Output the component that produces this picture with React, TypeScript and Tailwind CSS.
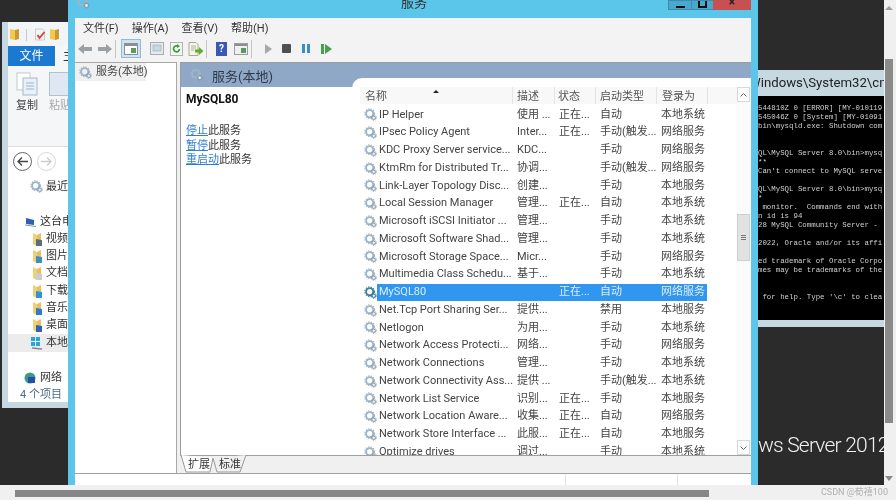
import React from 'react'

const uiFont = { fontFamily: 'Roboto, "Noto Sans CJK SC", sans-serif' }

const services: [string, string, string, string, string][] = [
  ['IP Helper', '使用 ...', '正在...', '自动', '本地系统'],
  ['IPsec Policy Agent', 'Inter...', '正在...', '手动(触发...', '网络服务'],
  ['KDC Proxy Server service...', 'KDC...', '', '手动', '网络服务'],
  ['KtmRm for Distributed Tr...', '协调...', '', '手动(触发...', '网络服务'],
  ['Link-Layer Topology Disc...', '创建...', '', '手动', '本地服务'],
  ['Local Session Manager', '管理...', '正在...', '自动', '本地系统'],
  ['Microsoft iSCSI Initiator ...', '管理...', '', '手动', '本地系统'],
  ['Microsoft Software Shad...', '管理...', '', '手动', '本地系统'],
  ['Microsoft Storage Space...', 'Micr...', '', '手动', '网络服务'],
  ['Multimedia Class Schedu...', '基于...', '', '手动', '本地系统'],
  ['MySQL80', '', '正在...', '自动', '网络服务'],
  ['Net.Tcp Port Sharing Ser...', '提供...', '', '禁用', '本地服务'],
  ['Netlogon', '为用...', '', '手动', '本地系统'],
  ['Network Access Protecti...', '网络...', '', '手动', '网络服务'],
  ['Network Connections', '管理...', '', '手动', '本地系统'],
  ['Network Connectivity Ass...', '提供 ...', '', '手动(触发...', '本地系统'],
  ['Network List Service', '识别...', '正在...', '手动', '本地服务'],
  ['Network Location Aware...', '收集...', '正在...', '自动', '网络服务'],
  ['Network Store Interface ...', '此服...', '正在...', '自动', '本地服务'],
  ['Optimize drives', '调过...', '', '手动', '本地系统'],
]

const consoleLines = [
  "544810Z 0 [ERROR] [MY-010119",
  "545046Z 0 [System] [MY-01091",
  "bin\\mysqld.exe: Shutdown com",
  "",
  "",
  "QL\\MySQL Server 8.0\\bin>mysq",
  "**",
  "Can't connect to MySQL serve",
  "",
  "QL\\MySQL Server 8.0\\bin>mysq",
  "*",
  " monitor.  Commands end with",
  "n id is 94",
  "28 MySQL Community Server - ",
  "",
  "2022, Oracle and/or its affi",
  "",
  "ed trademark of Oracle Corpo",
  "mes may be trademarks of the",
  "",
  "",
  " for help. Type '\\c' to clea",
]

const navItems: [string, string][] = [
  ['视频', '#5b6b80'],
  ['图片', '#3f8fc0'],
  ['文档', '#c8ccd4'],
  ['下载', '#2f93d8'],
  ['音乐', '#3578c8'],
  ['桌面', '#2f62b8'],
]

function GearIcon({ size = 13, dark = false }: { size?: number; dark?: boolean }) {
  const a = dark ? '#3f7f9f' : '#9db4c8'
  const b = dark ? '#2a6a8c' : '#7f98ac'
  return (
    <svg width={size} height={size} viewBox="0 0 16 16" className="shrink-0">
      <circle cx="7" cy="7" r="4.4" fill="none" stroke={a} strokeWidth="2.4" />
      <circle cx="7" cy="7" r="6" fill="none" stroke={a} strokeWidth="1.3" strokeDasharray="1.6 1.6" />
      <circle cx="12" cy="12" r="2.2" fill="#e8eef3" stroke={b} strokeWidth="1.2" />
      <circle cx="12" cy="12" r="3.4" fill="none" stroke={b} strokeWidth="0.9" strokeDasharray="1.2 1.2" />
    </svg>
  )
}

function NavFolder({ color }: { color: string }) {
  return (
    <svg width="11" height="15" viewBox="0 0 11 15" className="shrink-0">
      <path d="M1 1 L5 3 V14 L1 12 Z" fill="#f0d078" />
      <path d="M5 3 L9 1 V12 L5 14 Z" fill="#e8c060" />
      <path d="M4 7 L10 8 V14 L4 14 Z" fill={color} />
    </svg>
  )
}

function Folder() {
  return (
    <svg width="11" height="13" viewBox="0 0 11 13" className="shrink-0">
      <path d="M1 1 L6 2 V12 L1 11 Z" fill="#f2c94f" />
      <path d="M6 2 L10 1 V11 L6 12 Z" fill="#c99a32" />
    </svg>
  )
}

function Toolbar() {
  return (
    <div className="h-[24px] flex items-center bg-[#f3f3f3] pb-[3px] pl-[1px] shrink-0">
      <svg width="16" height="12" viewBox="0 0 16 12" className="ml-[1px]">
        <path d="M1 6 L7 1 V4 H15 V8 H7 V11 Z" fill="#9aa0a4" />
      </svg>
      <svg width="16" height="12" viewBox="0 0 16 12" className="ml-[4px]">
        <path d="M15 6 L9 1 V4 H1 V8 H9 V11 Z" fill="#9aa0a4" />
      </svg>
      <div className="w-px h-[18px] bg-[#c4c4c4] ml-[2px]" />
      <div className="w-[20px] h-[19px] ml-[5px] flex items-center justify-center bg-[#cfe3f2] border border-[#8fbbd8]">
        <svg width="14" height="12" viewBox="0 0 14 12">
          <rect x="0.5" y="0.5" width="13" height="11" fill="#fff" stroke="#8a8f94" />
          <rect x="1" y="1" width="12" height="2" fill="#8a8f94" />
          <rect x="7" y="5" width="5" height="5" fill="#5a9a5a" />
        </svg>
      </div>
      <svg width="14" height="13" viewBox="0 0 14 13" className="ml-[9px]">
        <rect x="0.5" y="0.5" width="13" height="12" fill="#e6eaee" stroke="#a8adb2" />
        <rect x="3" y="3" width="8" height="6" fill="#c8d8e0" stroke="#a0a8ae" strokeWidth="0.6" />
      </svg>
      <svg width="13" height="14" viewBox="0 0 13 14" className="ml-[6px]">
        <rect x="0.5" y="0.5" width="12" height="13" fill="#f4f6f4" stroke="#b0b4b0" />
        <path d="M9.5 7 A3 3 0 1 1 8 4.2" fill="none" stroke="#3c9a3c" strokeWidth="1.7" />
        <path d="M7 2 L10 4.3 L7 6 Z" fill="#3c9a3c" />
      </svg>
      <svg width="16" height="14" viewBox="0 0 16 14" className="ml-[5px]">
        <path d="M1 0.5 H8 L10 2.5 V13.5 H1 Z" fill="#f7f5e6" stroke="#a8a898" />
        <path d="M3 4 H8 M3 6 H8 M3 8 H6" stroke="#a0a0a0" strokeWidth="0.8" />
        <path d="M7 7.5 H11 V5 L15.5 9 L11 13 V10.5 H7 Z" fill="#5cb030" />
      </svg>
      <div className="w-px h-[18px] bg-[#c4c4c4] ml-[2px]" />
      <div className="w-[11px] h-[14px] ml-[9px] bg-[#3d57b0] text-white text-[10px] leading-[14px] font-bold text-center">?</div>
      <svg width="14" height="12" viewBox="0 0 14 12" className="ml-[7px]">
        <rect x="0.5" y="0.5" width="13" height="11" fill="#eef0f2" stroke="#9a9ea2" />
        <rect x="1" y="1" width="12" height="2" fill="#8a8f94" />
        <rect x="7" y="5" width="5" height="5" fill="#5a9a5a" />
      </svg>
      <div className="w-px h-[18px] bg-[#c4c4c4] ml-[3px]" />
      <svg width="7" height="10" viewBox="0 0 7 10" className="ml-[13px]">
        <path d="M0 0 L7 5 L0 10 Z" fill="#a4a8ac" />
      </svg>
      <div className="w-[9px] h-[9px] ml-[10px] bg-[#505050] rounded-[1px]" />
      <div className="flex gap-[2px] ml-[11px]">
        <div className="w-[3px] h-[9px] bg-[#3a8ec8]" />
        <div className="w-[3px] h-[9px] bg-[#3a8ec8]" />
      </div>
      <div className="flex items-center gap-[1px] ml-[11px]">
        <div className="w-[3px] h-[10px] bg-[#4aa04a]" />
        <svg width="7" height="10" viewBox="0 0 7 10">
          <path d="M0 0 L7 5 L0 10 Z" fill="#4aa04a" />
        </svg>
      </div>
    </div>
  )
}

function ServiceRow({ row }: { row: [string, string, string, string, string] }) {
  const selected = row[0] === 'MySQL80'
  return (
    <div className="h-[17.75px] flex items-center shrink-0">
      <div className="w-[17px] pl-[4px] flex items-center">
        <GearIcon dark={selected} />
      </div>
      <div
        className={
          selected
            ? 'w-[330px] h-full flex items-center bg-[#3096f0] text-[#dcecfa]'
            : 'w-[330px] h-full flex items-center text-[#444]'
        }
      >
        <span className="w-[136px] pl-[2px] whitespace-nowrap overflow-hidden">{row[0]}</span>
        <span className="w-[42px] pl-[4px] whitespace-nowrap">{row[1]}</span>
        <span className="w-[41px] pl-[4px] whitespace-nowrap">{row[2]}</span>
        <span className="w-[61px] pl-[4px] whitespace-nowrap overflow-hidden">{row[3]}</span>
        <span className="w-[50px] pl-[4px] whitespace-nowrap">{row[4]}</span>
      </div>
    </div>
  )
}

function ServiceList() {
  return (
    <div className="relative -mt-[9px] flex-1 min-w-0 bg-white rounded-tl-[10px] pt-[9px] pl-[8px] flex flex-col overflow-hidden">
      <div className="flex flex-1 min-h-0">
        <div className="w-[377px] flex flex-col min-h-0 text-[11px]">
          <div className="h-[17px] shrink-0 flex items-center bg-[#f8f8f8] text-[#555] relative leading-[20px]">
            <span className="w-[153px] pl-[5px] h-full border-r border-[#e4e4e4]">名称</span>
            <span className="w-[42px] pl-[4px] h-full border-r border-[#e4e4e4]">描述</span>
            <span className="w-[41px] pl-[3px] h-full border-r border-[#e4e4e4]">状态</span>
            <span className="w-[61px] pl-[4px] h-full border-r border-[#e4e4e4]">启动类型</span>
            <span className="w-[51px] pl-[5px] h-full border-r border-[#e4e4e4]">登录为</span>
            <span className="absolute left-[73px] top-[3px] w-0 h-0 border-x-[3px] border-x-transparent border-b-[3px] border-b-[#222]" />
          </div>
          <div className="flex-1 min-h-0 flex flex-col overflow-hidden pt-[2px]">
            {services.map((row) => (
              <ServiceRow key={row[0]} row={row} />
            ))}
          </div>
        </div>
        <div className="w-[13px] flex flex-col bg-[#fbfbfb]">
          <div className="h-[15px] border border-[#d8d8d8] bg-white flex items-center justify-center">
            <svg width="7" height="4" viewBox="0 0 7 4"><path d="M0.5 3.5 L3.5 0.5 L6.5 3.5" fill="none" stroke="#666" /></svg>
          </div>
          <div className="h-[112px]" />
          <div className="h-[47px] bg-[#e2e2e2] border border-[#cfcfcf] flex items-center justify-center">
            <div className="w-[5px] h-[5px] border-y border-[#777] flex items-center"><div className="w-full h-px bg-[#777]" /></div>
          </div>
          <div className="flex-1" />
          <div className="h-[15px] border border-[#d8d8d8] bg-white flex items-center justify-center">
            <svg width="7" height="4" viewBox="0 0 7 4"><path d="M0.5 0.5 L3.5 3.5 L6.5 0.5" fill="none" stroke="#666" /></svg>
          </div>
        </div>
      </div>
    </div>
  )
}

function Explorer() {
  return (
    <div className="w-[68px] shrink-0 pt-[22px] pl-[2px]">
      <div className="h-[386px] bg-[#c5d7e2] pl-[6px] pb-[6px]">
        <div className="h-full bg-white flex flex-col overflow-hidden whitespace-nowrap text-[11px] text-[#333]">
          <div className="h-[24px] shrink-0 bg-[#f2f5f8] flex items-center pl-[1px] pt-[1px]">
            <Folder />
            <div className="w-px h-[12px] bg-[#c8c8c8] ml-[6px]" />
            <svg width="12" height="13" viewBox="0 0 11 13" className="shrink-0 ml-[7px]">
              <path d="M1 1 H8 L10 3 V12 H1 Z" fill="#f4f4f4" stroke="#b0b0b0" strokeWidth="0.6" />
              <path d="M3 7 L5 10 L10 4" fill="none" stroke="#d8423a" strokeWidth="1.8" />
            </svg>
            <div className="ml-[3px]"><Folder /></div>
          </div>
          <div className="h-[20px] shrink-0 bg-[#f5f6f7] flex">
            <div className="w-[47px] shrink-0 bg-[#1b79d0] text-white text-[12px] text-center leading-[20px]">文件</div>
            <div className="pl-[8px] text-[12px] leading-[20px]">主</div>
          </div>
          <div className="h-[81px] shrink-0 bg-[#f5f6f7] border-b border-[#dcdcdc] flex pt-[6px] text-[11px]">
            <div className="w-[38px] shrink-0 flex flex-col items-center">
              <svg width="22" height="24" viewBox="0 0 22 24">
                <rect x="1" y="1" width="13" height="17" fill="#fff" stroke="#c4c8cc" />
                <rect x="7" y="6" width="14" height="17" fill="#e8f0f8" stroke="#a8b8c8" />
                <path d="M10 11 H18 M10 14 H18 M10 17 H18" stroke="#9ab4cc" />
              </svg>
              <span className="mt-[2px] text-[#444]">复制</span>
            </div>
            <div className="flex flex-col text-[#aaa] pl-[3px]">
              <div className="w-[24px] h-[24px] bg-[#dfe8f2] border border-[#b4c0cc]" />
              <span className="mt-[2px]">粘贴</span>
            </div>
          </div>
          <div className="h-[31px] shrink-0 flex items-center pl-[5px] pb-[3px] gap-[5px]">
            <div className="w-[19px] h-[19px] shrink-0 rounded-full border-[1.5px] border-[#666] flex items-center justify-center">
              <svg width="11" height="9" viewBox="0 0 11 9"><path d="M5 0.5 L1 4.5 L5 8.5 M1 4.5 H11" fill="none" stroke="#444" strokeWidth="1.4" /></svg>
            </div>
            <div className="w-[19px] h-[19px] shrink-0 rounded-full border border-[#d8d8d8] flex items-center justify-center">
              <svg width="11" height="9" viewBox="0 0 11 9"><path d="M6 0.5 L10 4.5 L6 8.5 M0 4.5 H10" fill="none" stroke="#ccc" strokeWidth="1.4" /></svg>
            </div>
          </div>
          <div className="flex flex-col">
            <div className="h-[17.5px] flex items-center gap-[3px] pl-[22px]">
              <GearIcon size={13} />
              <span>最近</span>
            </div>
            <div className="h-[17.5px]" />
            <div className="h-[17.5px] flex items-center gap-[4px] pl-[17px]">
              <svg width="11" height="10" viewBox="0 0 11 10" className="shrink-0">
                <path d="M1 1 L9 3 V8 L1 7 Z" fill="#2f5fb0" />
                <path d="M0 8 L11 9.5" stroke="#8a94a0" />
              </svg>
              <span>这台电脑</span>
            </div>
            {navItems.map(([label, color]) => (
              <div key={label} className="h-[17.3px] flex items-center gap-[3px] pl-[24px]">
                <NavFolder color={color} />
                <span>{label}</span>
              </div>
            ))}
            <div className="h-[17.5px] flex items-center gap-[3px] pl-[22px] bg-[#ececec]">
              <svg width="13" height="13" viewBox="0 0 13 13" className="shrink-0">
                <rect x="1" y="0" width="4" height="4" fill="#25a8d8" />
                <rect x="6" y="0" width="4" height="4" fill="#25a8d8" />
                <rect x="1" y="5" width="4" height="4" fill="#25a8d8" />
                <rect x="6" y="5" width="4" height="4" fill="#25a8d8" />
                <path d="M2 11 L12 12" stroke="#808890" strokeWidth="1.5" />
              </svg>
              <span>本地磁盘</span>
            </div>
            <div className="h-[17.5px]" />
            <div className="h-[17.5px] flex items-center gap-[3px] pl-[16px]">
              <svg width="13" height="13" viewBox="0 0 13 13" className="shrink-0">
                <circle cx="6" cy="6" r="5.5" fill="#3c9a8c" />
                <rect x="4" y="5" width="7" height="6" fill="#2450a8" />
              </svg>
              <span>网络</span>
            </div>
            <div className="text-[#4a6a8a] pl-[12px] leading-[15px]">4 个项目</div>
          </div>
        </div>
      </div>
    </div>
  )
}

function ServicesWindow() {
  return (
    <div className="w-[690px] shrink-0 bg-[#5bc5ea] flex flex-col px-[7px]">
      <div className="h-[18px] shrink-0 relative">
        <div className="absolute left-[1px] -top-[5px]">
          <GearIcon size={14} />
        </div>
        <div className="absolute left-[326px] -top-[6px] text-[13px] leading-[18px] text-[#333]">服务</div>
        <div className="absolute right-0 top-0 flex h-[10px]">
          <div className="w-[24px] h-full bg-[#4aa8cc] border border-[#3a8cb0] flex justify-center items-end pb-[1px]">
            <div className="w-[9px] h-[2px] bg-[#111]" />
          </div>
          <div className="w-[21px] h-full bg-[#4aa8cc] border-y border-[#3a8cb0] flex justify-center items-end pb-[1px]">
            <div className="w-[9px] h-[7px] border-x-2 border-b-2 border-[#111]" />
          </div>
          <div className="w-[38px] h-full bg-[#c75050] flex justify-center items-start text-[#222] text-[12px] leading-[4px] font-bold">×</div>
        </div>
      </div>
      <div className="flex-1 min-h-0 flex flex-col bg-white text-[#333]">
        <div className="h-[20px] shrink-0 flex items-center gap-[13px] pl-[8px] pt-[2px] bg-[#f3f3f3] text-[11px]">
          <span>文件(F)</span>
          <span>操作(A)</span>
          <span>查看(V)</span>
          <span>帮助(H)</span>
        </div>
        <Toolbar />
        <div className="flex-1 min-h-0 flex bg-[#f0f0f0]">
          <div className="w-[102px] shrink-0 bg-white border-r border-t border-[#a8a8a8]">
            <div className="w-[71px] h-[18px] bg-[#f0f0f0] flex items-center gap-[4px] pl-[4px] pt-[1px] text-[11px] text-[#444]">
              <GearIcon size={13} />
              <span className="whitespace-nowrap">服务(本地)</span>
            </div>
          </div>
          <div className="flex-1 min-w-0 pl-[3px] flex flex-col">
            <div className="flex-1 min-h-0 flex flex-col border-l border-t border-[#9c9c9c] bg-white">
              <div className="h-[24px] shrink-0 bg-[#8fa8c8] flex items-start gap-[9px] pl-[9px] pt-[5px] text-[13px] text-[#2f3a48] leading-[20px]">
                <GearIcon size={13} />
                <span className="-mt-[1px]">服务(本地)</span>
              </div>
              <div className="flex-1 min-h-0 flex">
                <div className="w-[171px] shrink-0 pl-[5px] pt-[3px] text-[11px] leading-[14.5px]">
                  <div className="font-bold text-[#111] text-[12px] leading-[18px]">MySQL80</div>
                  <div className="mt-[16px] flex flex-col">
                    <div><span className="text-[#2f7fd0] underline">停止</span>此服务</div>
                    <div><span className="text-[#2f7fd0] underline">暂停</span>此服务</div>
                    <div><span className="text-[#2f7fd0] underline">重启动</span>此服务</div>
                  </div>
                </div>
                <ServiceList />
              </div>
            </div>
            <div className="h-[18px] shrink-0 bg-[#f0f0f0] border-t border-[#a0a0a0] flex items-start pl-[8px] gap-[9px] text-[11px] leading-[17px] text-[#333] relative">
              <svg width="70" height="18" viewBox="0 0 70 18" className="absolute left-0 -top-px">
                <path d="M1 0 L6 17 H30 L33 3" fill="#fff" stroke="#999" />
                <path d="M33 3 L37 17 H60 L66 0" fill="#f0f0f0" stroke="#999" />
              </svg>
              <span className="relative">扩展</span>
              <span className="relative">标准</span>
            </div>
          </div>
        </div>
        <div className="h-[12px] shrink-0 bg-white border-t border-[#a0a0a0] flex">
          <div className="w-[491px] border-r border-[#e4e4e4]" />
          <div className="w-[112px] border-r border-[#e4e4e4]" />
        </div>
      </div>
    </div>
  )
}

function RightColumn() {
  return (
    <div className="flex-1 min-w-0 flex">
      <div className="w-[126px] shrink-0 flex flex-col overflow-hidden">
        <div className="h-[70px] shrink-0" />
        <div className="h-[26px] shrink-0 bg-[#c6d8e0] text-[#222] text-[13.2px] leading-[26px] whitespace-nowrap overflow-hidden -indent-[9px]">
          Windows\System32\cmd.exe
        </div>
        <div
          className="h-[224px] shrink-0 bg-black text-[#d0d0d0] text-[7.4px] leading-[9px] pt-[8px] whitespace-pre overflow-hidden"
          style={{ fontFamily: '"Liberation Mono", monospace' }}
        >
          {consoleLines.map((line, i) => (
            <div key={i} className="h-[9px]">{line}</div>
          ))}
        </div>
        <div className="h-[7px] shrink-0 bg-[#c6d8e0]" />
        <div className="flex-1 flex items-end pb-[24px]">
          <span className="text-[21px] tracking-[-0.8px] leading-[32px] font-light text-[#f2f2f2] whitespace-nowrap">
            ws Server 2012
          </span>
        </div>
      </div>
      <div className="flex-1 bg-[#f0f0f0] flex flex-col items-center pl-[1px] pr-[3px]">
        <div className="h-[59px] pt-[6px] shrink-0">
          <div className="w-0 h-0 border-x-[4px] border-x-transparent border-b-[4px] border-b-[#a0a0a0]" />
        </div>
        <div className="w-full h-[364px] shrink-0 bg-[#8a8a8a]" />
        <div className="flex-1 flex items-center">
          <div className="w-0 h-0 border-x-[4px] border-x-transparent border-t-[5px] border-t-[#8a8a8a] mt-[48px]" />
        </div>
      </div>
    </div>
  )
}

export default function App() {
  return (
    <div className="w-[896px] h-[500px] overflow-hidden flex flex-col bg-[#2b2b2b] blur-[0.4px]" style={uiFont}>
      <div className="h-[485px] shrink-0 flex">
        <Explorer />
        <ServicesWindow />
        <RightColumn />
      </div>
      <div className="flex-1 bg-[#f0f0f0] pt-[5px] pl-[15px] relative">
        <div className="w-[694px] h-[7px] bg-[#868686]" />
        <span className="absolute right-[8px] top-0 text-[9px] leading-[14px] text-[#b0b0b0]">CSDN @荀禧100</span>
      </div>
    </div>
  )
}
